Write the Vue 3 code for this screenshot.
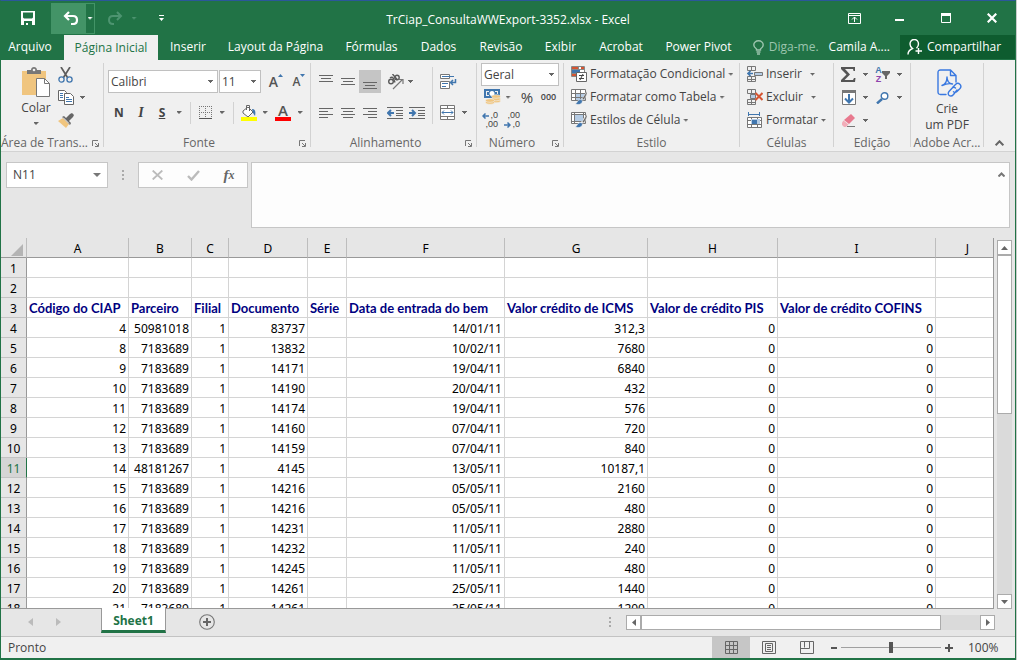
<script setup>
import { ref } from 'vue'

const tabs = [
  { name: 'Arquivo', width: 'w63' },
  { name: 'Página Inicial', width: 'w94', active: true },
  { name: 'Inserir', width: 'w60' },
  { name: 'Layout da Página', width: 'w115' },
  { name: 'Fórmulas', width: 'w77' },
  { name: 'Dados', width: 'w57' },
  { name: 'Revisão', width: 'w68' },
  { name: 'Exibir', width: 'w51' },
  { name: 'Acrobat', width: 'w70' },
  { name: 'Power Pivot', width: 'w85' },
]

const columns = ['A', 'B', 'C', 'D', 'E', 'F', 'G', 'H', 'I', 'J']

const headings = [
  'Código do CIAP', 'Parceiro', 'Filial', 'Documento', 'Série',
  'Data de entrada do bem', 'Valor crédito de ICMS', 'Valor de crédito PIS',
  'Valor de crédito COFINS', '',
]

const records = [
  ['4', '50981018', '83737', '14/01/11', '312,3'],
  ['8', '7183689', '13832', '10/02/11', '7680'],
  ['9', '7183689', '14171', '19/04/11', '6840'],
  ['10', '7183689', '14190', '20/04/11', '432'],
  ['11', '7183689', '14174', '19/04/11', '576'],
  ['12', '7183689', '14160', '07/04/11', '720'],
  ['13', '7183689', '14159', '07/04/11', '840'],
  ['14', '48181267', '4145', '13/05/11', '10187,1'],
  ['15', '7183689', '14216', '05/05/11', '2160'],
  ['16', '7183689', '14216', '05/05/11', '480'],
  ['17', '7183689', '14231', '11/05/11', '2880'],
  ['18', '7183689', '14232', '11/05/11', '240'],
  ['19', '7183689', '14245', '11/05/11', '480'],
  ['20', '7183689', '14261', '25/05/11', '1440'],
  ['21', '7183689', '14261', '25/05/11', '1200'],
]

const blank = () => Array(10).fill('')
const rows = [
  { n: 1, cells: blank() },
  { n: 2, cells: blank() },
  { n: 3, cells: headings, heading: true },
  ...records.map(([id, partner, doc, date, icms], i) => ({
    n: i + 4,
    cells: [id, partner, '1', doc, '', date, icms, '0', '0', ''],
  })),
]

const font = ref('Calibri')
const size = ref('11')
const format = ref('Geral')
const cellName = ref('N11')
const formula = ref('')
const zoom = ref(50)
</script>

<template>
  <div class="window">
    <header class="titlebar">
      <div class="quick">
        <button class="save" aria-label="Salvar">
          <svg width="14" height="14" viewBox="0 0 14 14"><path fill="#fff" fill-rule="evenodd" d="M0 0h14v14H0zM2 1.500v5l1 1h8l1-1v-5zM3 10v4h2v-2h2v2h4v-4z" /></svg>
        </button>
        <button class="undo" aria-label="Desfazer">
          <svg width="16" height="14" viewBox="0 0 16 14"><path fill="none" stroke="#fff" stroke-width="2.200" d="M6 1 2 5l4 4M2 5h8q4 0 4 4t-4 4H8" /></svg>
        </button>
        <button class="undo-more" aria-label="Mais ações a desfazer"><i class="caret light" /></button>
        <button class="redo" aria-label="Refazer">
          <svg width="16" height="14" viewBox="0 0 16 14"><path fill="none" stroke="#4d9470" stroke-width="2" d="m10 1 4 4-4 4M14 5H6q-4 0-4 4t4 4h1" /></svg>
        </button>
        <button class="redo-more" aria-label="Mais ações a refazer"><i class="caret faint" /></button>
        <button class="customize" aria-label="Personalizar barra">
          <svg width="5" height="6" viewBox="0 0 5 6"><path fill="#fff" d="M0 0h5v1H0zM0 3h5L2.500 6z" /></svg>
        </button>
      </div>
      <h1>TrCiap_ConsultaWWExport-3352.xlsx - Excel</h1>
      <div class="controls">
        <button aria-label="Opções da faixa">
          <svg width="13" height="11" viewBox="0 0 13 11"><path fill="none" stroke="#fff" d="M.5.500h12v10H.5zM0 2.500h13M6.500 9V4M4 6.500 6.500 4 9 6.500" /></svg>
        </button>
        <button aria-label="Minimizar"><svg width="10" height="10" viewBox="0 0 10 10"><path fill="#fff" d="M0 6h9v2H0z" /></svg></button>
        <button aria-label="Maximizar"><svg width="10" height="10" viewBox="0 0 10 10"><path fill="none" stroke="#fff" d="M.5.500h9v9h-9z" /><path fill="#fff" d="M0 0h10v3H0z" /></svg></button>
        <button aria-label="Fechar"><svg width="10" height="10" viewBox="0 0 10 10"><path stroke="#fff" stroke-width="2.200" d="m.7.700 8.600 8.600m0-8.600L.7 9.300" /></svg></button>
      </div>
    </header>

    <nav class="tabs">
      <button v-for="t in tabs" :key="t.name" :class="[t.width, { active: t.active }]">{{ t.name }}</button>
      <div class="account">
        <button class="tell">
          <svg width="11" height="15" viewBox="0 0 11 15"><path fill="none" stroke="#9cc5ae" stroke-width="1.400" d="M3.500 10V9C1.500 7.500.8 6.500.8 5a4.700 4.200 0 0 1 9.400 0c0 1.500-.7 2.500-2.700 4v1zM3.500 12h4M4 14h3" /></svg>
          <span>Diga-me.</span>
        </button>
        <button class="user">Camila A....</button>
        <button class="share">
          <svg width="16" height="16" viewBox="0 0 16 16"><path fill="none" stroke="#fff" stroke-width="1.400" d="M1 15.500c0-3 2-5 4.500-6C3.500 8 3 6.500 3 5a4 4.300 0 0 1 8.500 0c0 1.500-.8 3-2 4.200M11.500 9v6M8.500 12H15" /></svg>
          <span>Compartilhar</span>
        </button>
      </div>
    </nav>

    <section class="ribbon">
      <div class="group clip">
        <div class="body">
          <button class="big paste">
            <svg width="29" height="31" viewBox="0 0 29 31"><path fill="#f0c57f" d="M0 4h24v24H0z" /><path fill="#777" d="M5 3h4c0-4 6-4 6 0h4v4H5z" /><circle cx="12" cy="3" r="1.300" fill="#f0f0f0" /><path fill="#fff" stroke="#777" d="M14.500 11.500h8l5 5v13h-13z" /><path fill="none" stroke="#777" d="M22.500 11.500v5h5" /></svg>
            <span>Colar</span><i class="caret" />
          </button>
          <div class="stack">
            <button aria-label="Recortar"><svg width="15" height="16" viewBox="0 0 15 16"><path stroke="#5c5c5c" stroke-width="1.700" d="M3 0l6.500 10.500M12 0 5.500 10.500" /><g fill="none" stroke="#4076ae" stroke-width="1.300"><circle cx="3.500" cy="12.500" r="2.600" /><circle cx="11.500" cy="12.500" r="2.600" /></g></svg></button>
            <button aria-label="Copiar"><svg width="16" height="15" viewBox="0 0 16 15"><g fill="#fff" stroke="#666"><path d="M.5.500h6l2 2v8h-8z" /><path d="M6.500 3.500h6l3 3v8h-9z" /></g><path stroke="#4076ae" d="M2 3.500h3M2 5.500h3M2 7.500h3M8 7.500h3M8 9.500h6M8 11.500h6" /></svg><i class="caret" /></button>
            <button aria-label="Pincel de formatação"><svg width="16" height="15" viewBox="0 0 16 15"><path fill="#f0c57f" d="m0 8 5-3 6 6-3 4z" /><path fill="#666" d="m4 4 2-1 2 2 4-4 2-1 2 2-1 2-4 4 2 2-1 2z" /><path stroke="#f0f0f0" d="m5 4.500 6 6" /></svg></button>
          </div>
        </div>
        <footer><span>Área de Trans...</span><button class="launch" aria-label="Abrir Área de Transferência"><svg width="7" height="7" viewBox="0 0 7 7"><path fill="none" stroke="#777" d="M.5 6V.5H6M3 3l3 3M6.500 3v3.500H3" /></svg></button></footer>
      </div>

      <div class="group fonte">
        <div class="body two">
          <div class="line first">
            <label class="combo"><select v-model="font" aria-label="Fonte"><option>Calibri</option></select><i class="caret" /></label>
            <label class="combo"><select v-model="size" aria-label="Tamanho"><option>11</option></select><i class="caret" /></label>
            <button class="glyph" aria-label="Aumentar fonte"><b>A</b><svg width="5" height="3" viewBox="0 0 5 3"><path fill="#4076ae" d="M0 3h5L2.500 0z" /></svg></button>
            <button class="glyph small" aria-label="Diminuir fonte"><b>A</b><svg width="5" height="3" viewBox="0 0 5 3"><path fill="#4076ae" d="M0 0h5L2.500 3z" /></svg></button>
          </div>
          <div class="line second">
            <button class="bold">N</button><button class="italic">I</button><button class="underline">S</button><button aria-label="Mais sublinhados"><i class="caret" /></button><hr>
            <button aria-label="Bordas"><svg width="13" height="13" viewBox="0 0 13 13"><path fill="none" stroke="#777" stroke-dasharray="1 1" d="M.5 0v12M6.500 0v12M12.500 0v12M0 .5h13M0 6.500h13" /><path stroke="#555" d="M0 12.500h13" /></svg></button><button aria-label="Mais bordas"><i class="caret" /></button><hr>
            <button aria-label="Cor de preenchimento"><svg width="16" height="16" viewBox="0 0 16 16"><path fill="#fff" stroke="#666" d="m2 6 5-4 5 5-5 5-5-4zM5.500 5V.500h3V6" /><path fill="#4076ae" d="M11 4c3 0 4 2 3 7l-2-3z" /><path fill="#ff0" d="M0 12h16v4H0z" /></svg></button><button aria-label="Mais cores de preenchimento"><i class="caret" /></button>
            <button class="fontcolor" aria-label="Cor da fonte"><b>A</b><i class="red" /></button><button aria-label="Mais cores da fonte"><i class="caret" /></button>
          </div>
        </div>
        <footer><span>Fonte</span><button class="launch" aria-label="Abrir Fonte"><svg width="7" height="7" viewBox="0 0 7 7"><path fill="none" stroke="#777" d="M.5 6V.5H6M3 3l3 3M6.500 3v3.500H3" /></svg></button></footer>
      </div>

      <div class="group align">
        <div class="body">
          <div class="grid">
            <button aria-label="Alinhar em cima"><svg width="14" height="16" viewBox="0 0 14 16"><path stroke="#666" d="M0 1.500h14M2 4.500h10M0 7.500h14" /></svg></button>
            <button aria-label="Alinhar no meio"><svg width="14" height="16" viewBox="0 0 14 16"><path stroke="#666" d="M0 4.500h14M2 7.500h10M0 10.500h14" /></svg></button>
            <button class="pressed" aria-label="Alinhar embaixo"><svg width="14" height="16" viewBox="0 0 14 16"><path stroke="#666" d="M0 8.500h14M2 11.500h10M0 14.500h14" /></svg></button>
            <button aria-label="Orientação"><svg width="17" height="16" viewBox="0 0 17 16"><g fill="none" stroke="#5a5a5a" stroke-width="1.400"><circle cx="4" cy="7.500" r="2.300" /><path d="M3 4q2-1.500 3.500.5L8 8.500M5.500 0l5 6" /><circle cx="10" cy="3.500" r="2.200" /></g><path fill="none" stroke="#777" stroke-width="1.200" d="m6 15 9-9M11.500 5.500H16V10" /></svg></button>
            <button class="left" aria-label="Mais orientações"><i class="caret" /></button>
            <button aria-label="Alinhar à esquerda"><svg width="14" height="12" viewBox="0 0 14 12"><path stroke="#666" d="M0 1.500h14M0 4.500h9M0 7.500h14M0 10.500h9" /></svg></button>
            <button aria-label="Centralizar"><svg width="14" height="12" viewBox="0 0 14 12"><path stroke="#666" d="M0 1.500h14M2 4.500h10M0 7.500h14M2 10.500h10" /></svg></button>
            <button aria-label="Alinhar à direita"><svg width="14" height="12" viewBox="0 0 14 12"><path stroke="#666" d="M0 1.500h14M5 4.500h9M0 7.500h14M5 10.500h9" /></svg></button>
            <button aria-label="Diminuir recuo"><svg width="16" height="14" viewBox="0 0 16 14"><path stroke="#666" d="M0 1.500h16M9 4.500h7M9 7.500h7M9 9.500h7M0 12.500h16" /><path fill="none" stroke="#4076ae" stroke-width="2" d="M7 7H1M4 4 1 7l3 3" /></svg></button>
            <button aria-label="Aumentar recuo"><svg width="16" height="14" viewBox="0 0 16 14"><path stroke="#666" d="M0 1.500h16M9 4.500h7M9 7.500h7M9 9.500h7M0 12.500h16" /><path fill="none" stroke="#4076ae" stroke-width="2" d="M0 7h6M3 4l3 3-3 3" /></svg></button>
          </div>
          <hr>
          <div class="wraps">
            <button aria-label="Quebrar texto"><svg width="17" height="16" viewBox="0 0 17 16"><path fill="#fff" stroke="#777" d="M.5.500h9v4h-9zM.5 7.500h9v7h-9z" /><path fill="none" stroke="#4076ae" d="M2 2.500h12M2 9.500h6M2 12.500h4" /><path fill="none" stroke="#4076ae" stroke-width="1.500" d="M15.500 5v3.500H11M13 6l-2.500 2.500L13 11" /></svg></button>
            <button class="merge" aria-label="Mesclar e centralizar"><svg width="15" height="15" viewBox="0 0 15 15"><path fill="#fff" stroke="#777" d="M.5.500h14v14H.5zM.5 3.500h14M.5 11.500h14M7.500.5v3M7.500 11.500v3" /><path fill="none" stroke="#4076ae" d="M2 7.500h11M4 5.500l-2 2 2 2M11 5.500l2 2-2 2" /></svg><i class="caret" /></button>
          </div>
        </div>
        <footer><span>Alinhamento</span><button class="launch" aria-label="Abrir Alinhamento"><svg width="7" height="7" viewBox="0 0 7 7"><path fill="none" stroke="#777" d="M.5 6V.5H6M3 3l3 3M6.500 3v3.500H3" /></svg></button></footer>
      </div>

      <div class="group number">
        <div class="body">
          <label class="combo"><select v-model="format" aria-label="Formato"><option>Geral</option></select><i class="caret" /></label>
          <div class="money">
            <button aria-label="Moeda"><svg width="17" height="16" viewBox="0 0 17 16"><path fill="#4076ae" d="M0 0h16v9H0z" /><path fill="#f0f0f0" d="M2 2h3v1H3v3h2v1H2zM11 2h3v3h-1V3h-2z" /><circle cx="8" cy="4.500" r="2.500" fill="#fff" /><g fill="#f0c57f" stroke="#f0f0f0" stroke-width=".6"><ellipse cx="12" cy="12" rx="4.500" ry="1.800" /><ellipse cx="12" cy="10" rx="4.500" ry="1.800" /><ellipse cx="12" cy="7.500" rx="4.500" ry="1.800" /><ellipse cx="6" cy="13.500" rx="4.500" ry="1.800" /><ellipse cx="6" cy="11.500" rx="4.500" ry="1.800" /></g></svg></button>
            <button aria-label="Mais moedas"><i class="caret" /></button>
            <button class="percent">%</button><button class="thousand">000</button>
          </div>
          <div class="decimals">
            <button aria-label="Aumentar casas decimais"><span class="dec"><svg width="7" height="6" viewBox="0 0 7 6"><path fill="none" stroke="#4076ae" stroke-width="1.500" d="M7 3H1M3.500.5 1 3l2.500 2.500" /></svg><small>,0</small></span><small>,00</small></button>
            <button aria-label="Diminuir casas decimais"><small>,00</small><span class="dec"><svg width="7" height="6" viewBox="0 0 7 6"><path fill="none" stroke="#4076ae" stroke-width="1.500" d="M0 3h6M3.500.5 6 3 3.500 5.500" /></svg><small>,0</small></span></button>
          </div>
        </div>
        <footer><span>Número</span><button class="launch" aria-label="Abrir Número"><svg width="7" height="7" viewBox="0 0 7 7"><path fill="none" stroke="#777" d="M.5 6V.5H6M3 3l3 3M6.500 3v3.500H3" /></svg></button></footer>
      </div>

      <div class="group style">
        <div class="body rows">
          <button><svg width="16" height="16" viewBox="0 0 16 16"><path fill="#fff" stroke="#888" d="M.5.500h13v10H.5zM.5 3.500h13M.5 7.500h13M7.500.5v10" /><path fill="#d65532" d="M1 1h6v2H1zM10 1h3v2h-3zM1 8h4v2H1z" /><path fill="#4076ae" d="M1 4h8v3H1z" /><path fill="#fff" stroke="#666" d="M5.500 6.500h10v9h-10z" /><path stroke="#444" d="M8 9.500h5M8 12.500h5M12 8l-3 6" /></svg><span>Formatação Condicional</span><i class="caret" /></button>
          <button><svg width="16" height="16" viewBox="0 0 16 16"><path fill="#fff" stroke="#777" d="M.5.500h14v11H.5z" /><path fill="#b5cce5" d="M5 4h9v7H5z" /><path stroke="#777" d="M.5 4.500h14M.5 8.500h14M4.500.5v11M9.500.5v11" /><path fill="#666" stroke="#f0f0f0" stroke-width=".6" d="m16 2-5 8 2 1 3-6z" /><path fill="#4076ae" stroke="#f0f0f0" stroke-width=".6" d="M4 15c2 0 2-4 5-4.500 2 0 3 1 2 3S8 16 4 15z" /></svg><span>Formatar como Tabela</span><i class="caret" /></button>
          <button><svg width="16" height="16" viewBox="0 0 16 16"><path fill="#fff" stroke="#777" d="M.5.500h14v11H.5z" /><path fill="#b5cce5" d="M4 3h8v6H4z" /><path stroke="#777" d="M.5 2.500h14M3.500.5v11M.5 9.500h10M12.500.5v6" /><path fill="#666" stroke="#f0f0f0" stroke-width=".6" d="m16 2-5 8 2 1 3-6z" /><path fill="#4076ae" stroke="#f0f0f0" stroke-width=".6" d="M4 15c2 0 2-4 5-4.500 2 0 3 1 2 3S8 16 4 15z" /></svg><span>Estilos de Célula</span><i class="caret" /></button>
        </div>
        <footer><span>Estilo</span></footer>
      </div>

      <div class="group cells">
        <div class="body rows">
          <button><svg width="16" height="16" viewBox="0 0 16 16"><g fill="none" stroke="#777"><path d="M.5.500h8v4h-8zM4.500.5v4M.5 10.500h8v5h-8zM4.500 10.500v5M.5 13.500h8" /><path fill="#b5cce5" d="M7.500 6.500h8v3h-8z" /></g><path fill="none" stroke="#4076ae" stroke-width="1.700" d="M6 7.500H1M3.500 5 1 7.500 3.500 10" /></svg><span>Inserir</span><i class="caret wide" /></button>
          <button><svg width="16" height="16" viewBox="0 0 16 16"><g fill="none" stroke="#777"><path d="M.5.500h8v4h-8zM4.500.5v4M.5 10.500h8v5h-8zM4.500 10.500v5M.5 13.500h8" /><path fill="#b5cce5" d="M3.500 5.500h5v4h-5z" /></g><path stroke="#d65532" stroke-width="2" d="m8.500 4 7 7m0-7-7 7" /></svg><span>Excluir</span><i class="caret wide" /></button>
          <button><svg width="16" height="16" viewBox="0 0 16 16"><path fill="none" stroke="#4076ae" d="M1.500 0v4M12.500 0v4M2 2.500h11" /><path fill="#fff" stroke="#777" d="M.5 5.500h14v10H.5zM.5 8.500h14M.5 12.500h14M4.500 5.500v10M10.500 5.500v10" /><path fill="#b5cce5" d="M4 7h9v5H4z" /><path fill="#4076ae" d="M5 8h5v4H5z" /></svg><span>Formatar</span><i class="caret" /></button>
        </div>
        <footer><span>Células</span></footer>
      </div>

      <div class="group edit">
        <div class="body">
          <button aria-label="Soma"><svg width="15" height="15" viewBox="0 0 15 15"><path fill="#555" d="M0 0h14v4h-1.500l-.5-2H4l5 5.500L3.500 13H12l1-2h1.500L14 15H0v-2l5.500-5.500L0 2z" /></svg></button><button aria-label="Mais funções"><i class="caret" /></button>
          <button aria-label="Classificar e Filtrar"><span class="az"><b class="blue">A</b><b class="purple">Z</b></span><svg width="8" height="8" viewBox="0 0 8 8"><path fill="#666" d="M0 0h8v2L5 5v3H3V5L0 2z" /></svg></button><button aria-label="Mais classificações"><i class="caret" /></button>
          <button aria-label="Preencher"><svg width="14" height="15" viewBox="0 0 14 15"><path fill="#fff" stroke="#777" d="M.5.500h13v14H.5z" /><path fill="#777" d="M0 0h14v3H0z" /><path fill="none" stroke="#4076ae" stroke-width="2" d="M7 4v8M3 8.500l4 4 4-4" /></svg></button><button aria-label="Mais preenchimentos"><i class="caret" /></button>
          <button aria-label="Localizar e Selecionar"><svg width="13" height="12" viewBox="0 0 13 12"><circle cx="8.500" cy="4" r="3.300" fill="#fff" stroke="#4076ae" stroke-width="1.400" /><path stroke="#4076ae" stroke-width="2.400" d="M6 7 1 11.500" /></svg></button><button aria-label="Mais buscas"><i class="caret" /></button>
          <button aria-label="Limpar"><svg width="14" height="14" viewBox="0 0 14 14"><path fill="#e8798e" d="m9 0 4 4-6 6-5-4z" /><path fill="#f2adb9" d="m1.500 6.500 5 4L4 13H2l-2-2V8.500z" /><path stroke="#777" d="M5 12.500h8" /></svg></button><button aria-label="Mais limpezas"><i class="caret" /></button>
        </div>
        <footer><span>Edição</span></footer>
      </div>

      <div class="group adobe">
        <div class="body">
          <button class="big">
            <svg width="32" height="29" viewBox="-6 0 32 29"><g fill="none" stroke="#3978e0" stroke-width="1.400" stroke-linecap="round" stroke-linejoin="round"><path d="M9 25.500H3.500Q1 25.500 1 23V3.500Q1 1 3.500 1h10L19 6.500V13M13.500 1.500v5H19" /><path d="M5 16.500c3-1 5-4 5-8.500 0 4 2 6.500 5.500 7-4-1-7 0-10.500 1.500z" /><path d="m15.500 18.500 3-3c3-3 7 1 4.500 4l-3 3c-1 1-2.500 1-3.500.2M20 21l-3.500 4.500c-3 3.500-7 0-4.500-3l3-3.300c1-1 2.500-1 3.500-.2" /></g></svg>
            <span>Crie<br>um PDF</span>
          </button>
        </div>
        <footer><span>Adobe Acr...</span></footer>
      </div>
      <button class="collapse" aria-label="Recolher faixa"><svg width="9" height="6" viewBox="0 0 9 6"><path fill="none" stroke="#666" stroke-width="2" d="m.7 5.300 3.800-4 3.800 4" /></svg></button>
    </section>

    <section class="formula">
      <div class="namebox">
        <input v-model="cellName" aria-label="Caixa de nome">
        <button aria-label="Abrir lista de nomes"><svg width="8" height="4" viewBox="0 0 8 4"><path fill="#777" d="M0 0h8L4 4z" /></svg></button>
      </div>
      <svg class="dots" width="2" height="11" viewBox="0 0 2 11"><path fill="#aaa" d="M0 0h2v2H0zM0 4h2v2H0zM0 8h2v2H0z" /></svg>
      <div class="fx">
        <button aria-label="Cancelar"><svg width="11" height="10" viewBox="0 0 11 10"><path stroke="#bbb" stroke-width="1.800" d="m.7.500 9.600 9m0-9L.7 9.500" /></svg></button>
        <button aria-label="Inserir"><svg width="13" height="11" viewBox="0 0 13 11"><path fill="none" stroke="#bbb" stroke-width="2.400" d="m1 6 3.500 3.500L12 1" /></svg></button>
        <button aria-label="Inserir função"><em>f</em><em class="x">x</em></button>
      </div>
      <div class="content">
        <textarea v-model="formula" aria-label="Barra de fórmulas" />
        <button aria-label="Recolher barra"><svg width="7" height="5" viewBox="0 0 7 5"><path fill="none" stroke="#777" stroke-width="2" d="m.5 4.500 3-3 3 3" /></svg></button>
      </div>
    </section>

    <main class="sheet">
      <div class="cellsarea">
        <table>
          <colgroup><col class="c-row"><col v-for="c in columns" :key="c" :class="'c-' + c.toLowerCase()"></colgroup>
          <thead>
            <tr>
              <th class="corner" aria-label="Selecionar tudo"><svg width="12" height="12" viewBox="0 0 12 12"><path fill="#b4b4b4" d="M12 0v12H0z" /></svg></th>
              <th v-for="c in columns" :key="c" scope="col">{{ c }}</th>
            </tr>
          </thead>
          <tbody>
            <tr v-for="r in rows" :key="r.n" :class="{ heading: r.heading, current: r.n === 11 }">
              <th scope="row">{{ r.n }}</th>
              <td v-for="(v, i) in r.cells" :key="i">{{ v }}</td>
            </tr>
          </tbody>
        </table>
      </div>
      <div class="vscroll">
        <button aria-label="Rolar para cima"><svg width="7" height="4" viewBox="0 0 7 4"><path fill="#666" d="M0 4h7L3.500 0z" /></svg></button>
        <div class="track"><div class="thumb" /></div>
        <button aria-label="Rolar para baixo"><svg width="7" height="4" viewBox="0 0 7 4"><path fill="#666" d="M0 0h7L3.500 4z" /></svg></button>
      </div>
    </main>

    <section class="sheets">
      <button class="step" aria-label="Planilha anterior"><svg width="5" height="8" viewBox="0 0 5 8"><path fill="#bbb" d="M5 0v8L0 4z" /></svg></button>
      <button class="step" aria-label="Próxima planilha"><svg width="5" height="8" viewBox="0 0 5 8"><path fill="#bbb" d="M0 0v8l5-4z" /></svg></button>
      <button class="sheettab">Sheet1</button>
      <button class="add" aria-label="Nova planilha"><svg width="16" height="16" viewBox="0 0 16 16"><circle cx="8" cy="8" r="7.300" fill="none" stroke="#777" stroke-width="1.100" /><path stroke="#666" stroke-width="2" d="M4 8h8M8 4v8" /></svg></button>
      <svg class="dots grip" width="2" height="11" viewBox="0 0 2 11"><path fill="#aaa" d="M0 0h2v2H0zM0 4h2v2H0zM0 8h2v2H0z" /></svg>
      <div class="hscroll">
        <button aria-label="Rolar para a esquerda"><svg width="4" height="7" viewBox="0 0 4 7"><path fill="#666" d="M4 0v7L0 3.500z" /></svg></button>
        <div class="track"><div class="thumb" /></div>
        <button aria-label="Rolar para a direita"><svg width="4" height="7" viewBox="0 0 4 7"><path fill="#666" d="M0 0v7l4-3.500z" /></svg></button>
      </div>
    </section>

    <footer class="status">
      <span>Pronto</span>
      <div class="views">
        <button class="on" aria-label="Normal"><svg width="13" height="13" viewBox="0 0 13 13"><path fill="none" stroke="#666" d="M.5.500h12v12H.5zM4.500.5v12M8.500.5v12M.5 4.500h12M.5 8.500h12" /></svg></button>
        <button aria-label="Layout da página"><svg width="14" height="13" viewBox="0 0 14 13"><path fill="none" stroke="#666" d="M.5.500h13v12H.5zM3.500 2.500h7v8h-7zM5 4.500h4M5 6.500h4M5 8.500h4" /></svg></button>
        <button aria-label="Quebra de página"><svg width="14" height="13" viewBox="0 0 14 13"><path fill="none" stroke="#666" d="M.5.500h13v12H.5zM4.500.5v6M9.500.5v7M.5 7.500h9" /></svg></button>
      </div>
      <button class="zoombtn" aria-label="Reduzir"><svg width="9" height="9" viewBox="0 0 9 9"><path fill="#555" d="M1 4h6v2H1z" /></svg></button>
      <input v-model="zoom" type="range" min="0" max="100" aria-label="Zoom">
      <button class="zoombtn" aria-label="Ampliar"><svg width="9" height="9" viewBox="0 0 9 9"><path fill="#555" d="M0 4h8v2H0zM3 1h2v8H3z" /></svg></button>
      <span class="pct">100%</span>
    </footer>
  </div>
</template>

<style>
body { background: #c9cccb; }
</style>

<style scoped>
.window, .window * { box-sizing: border-box; }
.window {
  display: flex; flex-direction: column; height: 100vh;
  border: 1px solid #217346; border-top-color: #2b579a; border-bottom: 0;
  margin-right: 1px;
  background: #e6e6e6; color: #444;
  font: 12px/16px "Open Sans", "Noto Sans", sans-serif;
}
button, input, select, textarea { margin: 0; padding: 0; border: 0; background: none; color: inherit; font: inherit; border-radius: 0; outline: 0; }
button { display: flex; align-items: center; justify-content: center; white-space: nowrap; }
svg { display: block; flex: none; }
/* Stepped triangle: rows of five, three and one pixels */
.caret {
  flex: none; width: 5px; height: 3px; background: #666;
  clip-path: polygon(0 0, 100% 0, 100% 33.4%, 80% 33.4%, 80% 66.7%, 60% 66.7%, 60% 100%, 40% 100%, 40% 66.7%, 20% 66.7%, 20% 33.4%, 0 33.4%);
}
.caret.light { background: #fff; }
.caret.faint { background: #4d9470; }

.titlebar { display: grid; grid-template-columns: 1fr auto 1fr; align-items: center; height: 34px; flex: none; background: #217346; color: #fff; }
.titlebar h1 { margin: 4px 0 0; font-size: 12px; font-weight: 400; line-height: 16px; }
.quick { display: flex; align-items: center; height: 32px; padding-left: 16px; }
.quick button { height: 31px; }
.save { width: 22px; margin-right: 12px; }
.undo { width: 34px; padding-left: 5px; background: #439467; }
.undo-more { width: 10px; border: 1px solid #439467; }
.redo { width: 24px; margin-left: 8px; }
.redo-more { width: 14px; }
.customize { width: 40px; }
.controls { display: flex; justify-content: flex-end; }
.controls button { width: 46px; height: 32px; }

.tabs { display: flex; height: 25px; flex: none; background: #217346; color: #fff; }
.tabs > button { height: 24px; flex: none; }
.tabs > .active { background: #f0f0f0; color: #217346; height: 25px; }
.w63 { width: 63px; padding-right: 5px; } .w94 { width: 94px; } .w60 { width: 60px; } .w115 { width: 115px; } .w77 { width: 77px; }
.w57 { width: 57px; } .w68 { width: 68px; } .w51 { width: 51px; } .w70 { width: 70px; } .w85 { width: 85px; }
.account { display: flex; margin-left: auto; height: 24px; }
.tell { gap: 5px; color: #9cc5ae; margin-right: 10px; }
.user { margin-right: 10px; }
.share { width: 115px; gap: 4px; justify-content: flex-start; padding-left: 7px; background: #0e5c2f; }

.ribbon { display: flex; flex: none; height: 92px; background: #f0f0f0; border-bottom: 1px solid #d2d2d2; }
.group { display: flex; flex-direction: column; flex: none; height: 84px; margin-top: 3px; border-right: 1px solid #d2d2d2; }
.group .body { height: 72px; flex: none; }
.group footer { display: flex; align-items: center; height: 16px; flex: none; color: #666; white-space: nowrap; }
.group footer span { flex: 1; text-align: center; }
.launch { width: 16px; height: 16px; }
.clip { width: 103px; } .fonte { width: 207px; } .align { width: 166px; } .number { width: 87px; }
.style { width: 176px; } .cells { width: 94px; } .edit { width: 77px; } .adobe { width: 73px; }

.clip .body { display: flex; padding: 0 4px 0 18px; }
.big { flex-direction: column; justify-content: flex-start; }
.paste { width: 34px; padding-top: 4px; }
.paste span { margin: 2px 0 6px; }
.stack { display: grid; grid-template-rows: 23px 23px 23px; margin-left: 5px; align-items: center; }
.stack button { justify-content: flex-start; gap: 6px; }

.two { padding: 7px 0 0 4px; }
.line { display: grid; align-items: center; height: 23px; }
.first { grid-template-columns: 110px 42px 28px 16px; column-gap: 1px; }
.second { grid-template-columns: 22px 22px 20px 14px 8px 22px 12px 10px 22px 10px 26px 8px; margin-top: 8px; }
hr { width: 1px; height: 22px; margin: 0 auto; border: 0; background: #d2d2d2; }
.combo { display: grid; grid-template-columns: 1fr 5px; align-items: center; height: 23px; padding: 0 4px 0 2px; border: 1px solid #c0c0c0; background: #fff; }
.combo select { min-width: 0; height: 20px; appearance: none; }
.glyph { align-items: flex-start; font-size: 14px; }
.glyph.small { font-size: 12px; }
.glyph b, .fontcolor b { font-weight: 600; color: #555; }
.bold { font-weight: 700; } .underline { font-weight: 700; text-decoration: underline; }
.italic { font: italic 700 14px/16px "Liberation Serif", serif; }
.fontcolor { flex-direction: column; font-size: 15px; line-height: 13px; }
.red { width: 16px; height: 4px; background: #f00; }

.align .body { display: flex; padding: 4px 0 0 4px; }
.grid { display: grid; grid-template-columns: 22px 22px 25px 22px 22px; grid-template-rows: 23px 23px; row-gap: 8px; padding-top: 3px; }
.pressed { width: 22px; background: #c5c5c5; }
.grid button:nth-child(8) { width: 22px; }
.grid .left { justify-content: flex-start; padding-left: 2px; }
.align hr { height: 57px; margin: 0 7px 0 4px; }
.wraps { display: grid; grid-template-rows: 23px 23px; row-gap: 8px; padding-top: 3px; }
.wraps button { justify-content: flex-start; gap: 7px; }

.number .body { padding: 0 4px; }
.money { display: grid; grid-template-columns: 22px 10px 28px 15px; height: 22px; align-items: center; }
.percent { font-size: 15px; }
.thousand { font-size: 9px; font-weight: 600; }
.decimals { display: grid; grid-template-columns: 22px 22px; height: 24px; align-items: center; }
.decimals button { flex-direction: column; align-items: flex-end; width: 17px; }
.decimals small { font: 9px/9px "Liberation Sans", sans-serif; }
.dec { display: flex; align-items: center; gap: 1px; }

.rows { display: grid; grid-template-rows: 23px 23px 23px; justify-items: start; padding-left: 7px; }
.rows button { gap: 3px; height: 22px; }
.cells .wide { margin-left: 5px; }

.edit .body { display: grid; grid-template-columns: 29px 5px 29px 5px; grid-template-rows: 23px 23px 23px; align-items: center; }
.az { display: flex; flex-direction: column; font: 9px/9px "Liberation Sans", sans-serif; }
.blue { color: #4076ae; } .purple { color: #8e44ad; }

.adobe .big { width: 72px; padding-top: 6px; }
.adobe .big span { margin-top: 3px; }
.collapse { align-self: flex-end; width: 34px; height: 16px; }

.formula { display: flex; flex: none; align-items: flex-start; height: 86px; padding: 10px 5px 0; }
.namebox { display: flex; width: 102px; height: 26px; border: 1px solid #c6c6c6; background: #fff; flex: none; }
.namebox input { flex: 1; min-width: 0; padding-left: 6px; }
.namebox button { width: 20px; }
.dots { margin: 8px 14px 0; }
.fx { display: grid; grid-template-columns: repeat(3, 36px); height: 26px; width: 110px; flex: none; border: 1px solid #c6c6c6; background: #fdfdfd; }
.fx em { font: italic 700 15px/16px "Liberation Serif", serif; color: #666; }
.fx .x { font-size: 12px; }
.content { display: flex; flex: 1; height: 66px; margin-left: 3px; border: 1px solid #c6c6c6; background: #fdfdfd; }
.content textarea { flex: 1; resize: none; }
.content button { width: 15px; height: 22px; }

.sheet { display: flex; flex: 1; min-height: 0; padding-right: 3px; }
.cellsarea { flex: 1; min-width: 0; overflow: hidden; border-right: 1px solid #999; border-bottom: 1px solid #999; background: #fff; }
table { width: 100%; table-layout: fixed; border-collapse: separate; border-spacing: 0; color: #000; font: 12px/17px "Noto Sans", "Open Sans", sans-serif; }
.c-row { width: 26px; } .c-a { width: 102px; } .c-b { width: 63px; } .c-c { width: 37px; } .c-d { width: 79px; }
.c-e { width: 39px; } .c-f { width: 158px; } .c-g { width: 143px; } .c-h { width: 130px; } .c-i { width: 158px; }
th, td { height: 20px; padding: 2px 0 0; border-right: 1px solid #d4d4d4; border-bottom: 1px solid #d4d4d4; white-space: nowrap; }
th { background: #e6e6e6; font-weight: 400; text-align: center; }
thead th { border-right-color: #bdbdbd; border-bottom-color: #999; }
thead th:last-child { padding-left: 6px; }
tbody th { border-right-color: #999; border-bottom-color: #c3c3c3; }
.corner svg { margin: 2px 0 0 10px; }
td { padding-right: 2px; text-align: right; }
th:last-child, td:last-child { border-right: 0; }
.heading td { padding: 2px 0 0 2px; text-align: left; font-family: Lato, sans-serif; font-size: 13px; font-weight: 700; color: #000080; }
.current th { background: #d5d5d5; color: #217346; border-right-color: #217346; }

.vscroll { display: flex; flex-direction: column; width: 15px; margin: 2px 0 0 3px; }
.vscroll button, .hscroll button { width: 15px; height: 15px; flex: none; border: 1px solid #ababab; background: #fff; }
.track { display: flex; flex: 1; background: #dadada; }
.thumb { border: 1px solid #ababab; background: #fff; }
.vscroll .thumb { width: 15px; height: 47%; }

.sheets { display: flex; flex: none; height: 28px; border-bottom: 1px solid #c3c3c3; }
.step { width: 28px; height: 26px; }
.step:first-child { margin-left: 15px; }
.sheettab { width: 65px; height: 25px; margin: -1px 33px 0 29px; padding-top: 4px; border: 1px solid #999; border-top: 0; border-bottom: 3px solid #217346; background: #fff; color: #217346; font-weight: 700; }
.add { height: 26px; }
.grip { margin: 8px 15px 0 auto; }
.hscroll { display: flex; width: 369px; height: 15px; margin: 6px 20px 0 0; }
.hscroll .thumb { width: 300px; }

.status { display: flex; flex: none; align-items: center; height: 23px; padding-left: 7px; background: #f0f0f0; border-bottom: 2px solid #217346; }
.views { display: flex; margin-left: auto; }
.views button { width: 38px; height: 21px; }
.views .on { background: #c6c6c6; }
.zoombtn { width: 9px; height: 20px; margin-left: 4px; }
.status input { width: 100px; height: 14px; margin-left: 2px; appearance: none; }
.status input::-webkit-slider-runnable-track { height: 11px; background: linear-gradient(#a0a0a0, #a0a0a0) center / 100% 1px no-repeat; }
.status input::-webkit-slider-thumb { appearance: none; width: 4px; height: 11px; background: #555; }
.pct { width: 30px; margin: 0 17px 0 14px; }
</style>
